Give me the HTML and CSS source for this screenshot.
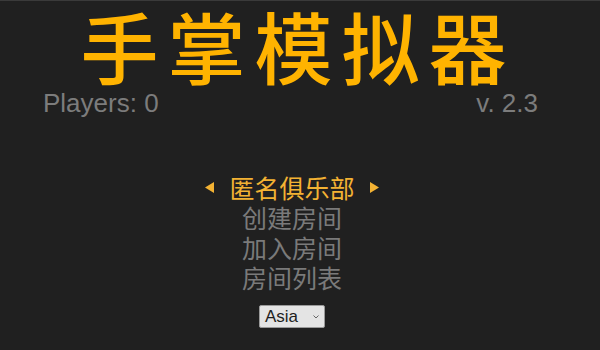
FILE: index.html
```html
<!DOCTYPE html>
<html lang="zh">
<head>
<meta charset="utf-8">
<title>手掌模拟器</title>
<link rel="stylesheet" href="styles.css">
</head>
<body>
<div class="screen">
  <h1 class="title">手掌模拟器</h1>
  <div class="info">
    <span class="players">Players: 0</span>
    <span class="version">v. 2.3</span>
  </div>
  <ul class="menu">
    <li class="item selected">
      <svg class="arrow" width="9" height="11" viewBox="0 0 9 11"><polygon points="9,0 9,11 0,5.5" fill="#f3b233"/></svg>
      <span class="label">匿名俱乐部</span>
      <svg class="arrow" width="9" height="11" viewBox="0 0 9 11"><polygon points="0,0 0,11 9,5.5" fill="#f3b233"/></svg>
    </li>
    <li class="item">创建房间</li>
    <li class="item">加入房间</li>
    <li class="item">房间列表</li>
  </ul>
  <div class="region">
    <div class="select">
      <span class="select-text">Asia</span>
      <svg class="chevron" width="6" height="4" viewBox="0 0 6 4"><polyline points="0.5,0.5 3,3 5.5,0.5" fill="none" stroke="#666" stroke-width="1"/></svg>
    </div>
  </div>
</div>
</body>
</html>
```

FILE: styles.css
```css
html, body {
  margin: 0;
  padding: 0;
  background: #1f1f1f;
}
.screen {
  width: 600px;
  height: 350px;
  box-sizing: border-box;
  border-top: 1px solid #3a3a3a;
  background: #202020;
  display: flex;
  flex-direction: column;
  align-items: stretch;
  overflow: hidden;
}
.title {
  margin: 2px 0 0 0;
  padding-right: 4px;
  text-align: center;
  font-family: "Noto Sans CJK SC", sans-serif;
  font-weight: 500;
  font-size: 78px;
  line-height: 84px;
  letter-spacing: 9px;
  color: #ffb300;
}
.info {
  display: flex;
  justify-content: space-between;
  margin-top: 2px;
  padding: 0 62px 0 43px;
  font-family: "Liberation Sans", Arial, sans-serif;
  font-size: 26px;
  line-height: 28px;
  color: #7c7c7c;
}
.menu {
  list-style: none;
  margin: 55px 16px 0 0;
  padding: 0;
  display: flex;
  flex-direction: column;
  align-items: center;
  font-family: "Noto Sans CJK SC", sans-serif;
  font-size: 25px;
  line-height: 30px;
  color: #7a7a7a;
}
.item {
  display: flex;
  align-items: center;
  gap: 15px;
}
.selected {
  color: #f3b233;
}
.region {
  display: flex;
  justify-content: center;
  margin: 13px 16px 0 0;
}
.select {
  width: 66px;
  height: 23px;
  box-sizing: border-box;
  border: 1px solid #9a9a9a;
  border-radius: 2px;
  background: #e4e4e4;
  display: flex;
  align-items: center;
  justify-content: space-between;
  padding: 0 5px 0 5px;
  font-family: "Liberation Sans", Arial, sans-serif;
  font-size: 17px;
  color: #1e1e1e;
}
```
